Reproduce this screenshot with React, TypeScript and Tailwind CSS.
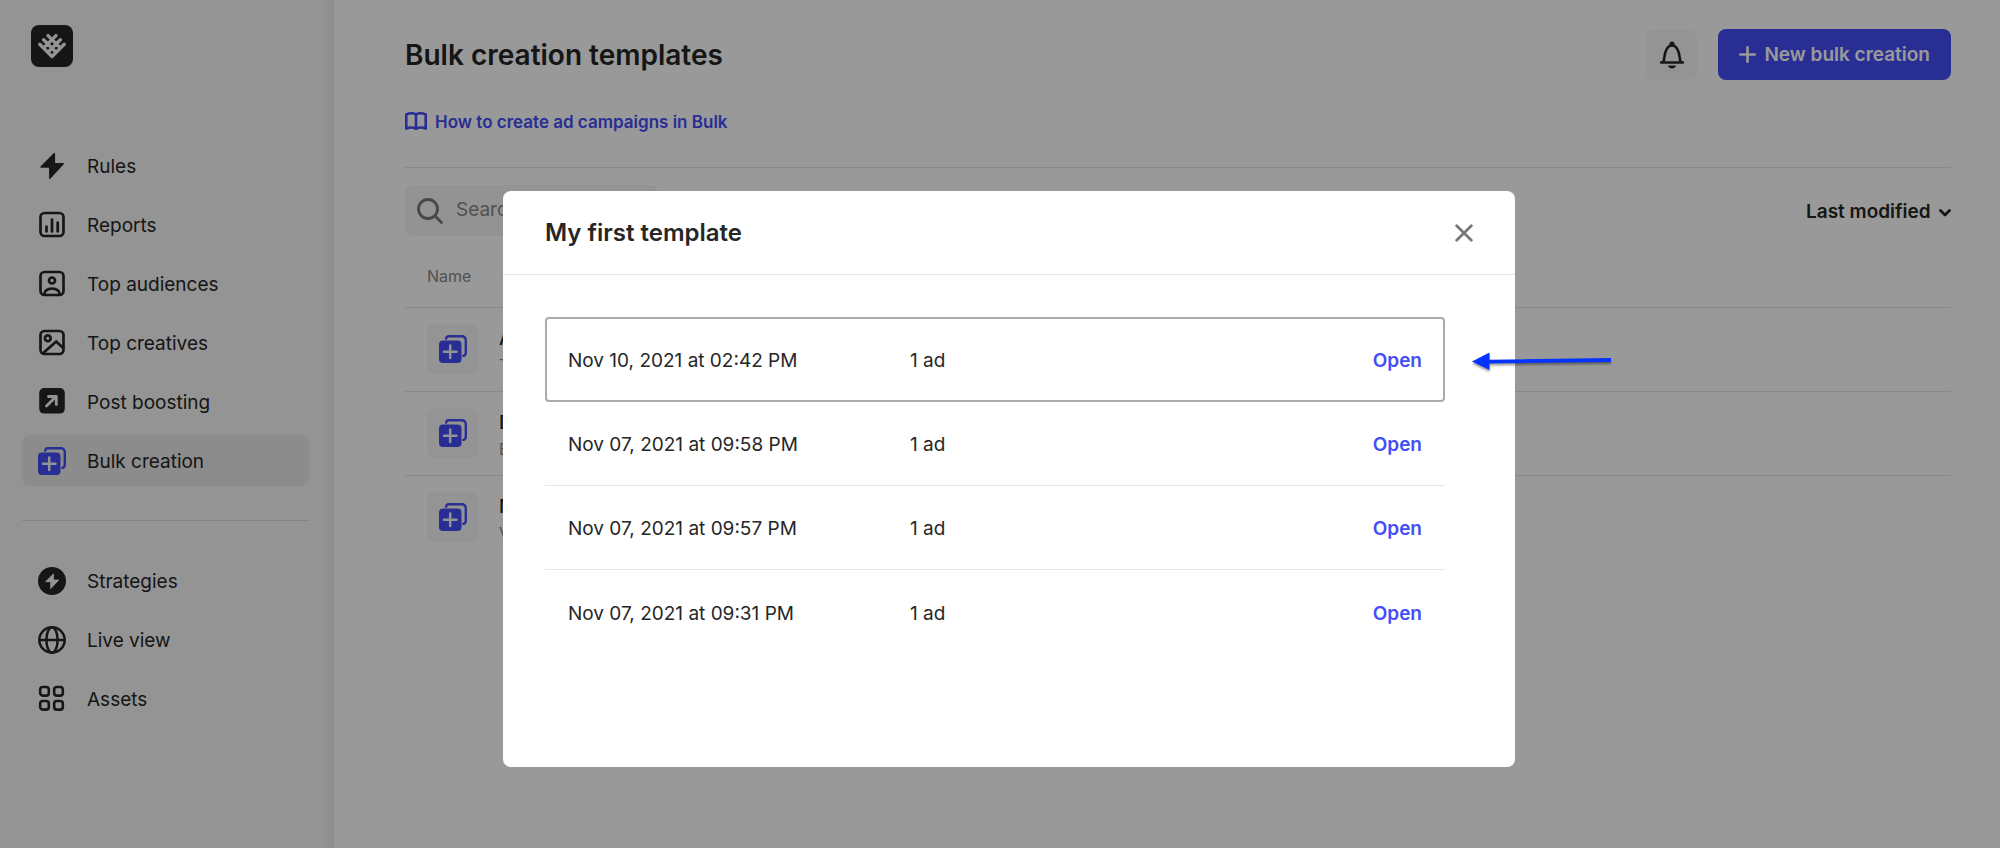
import type { ReactNode } from 'react'

const icon = 'w-7 h-7 shrink-0'

function Logo() {
  return (
    <svg viewBox="0 0 42 42" className="w-[42px] h-[42px]" aria-hidden="true">
      <rect width="42" height="42" rx="8" fill="#262626" />
      <path
        d="M8.8 19.3 21 31.5M12.6 14.8 25.2 27.4M17 10.6 29.5 23.1M33.2 19.3 21 31.5M29.4 14.8 16.8 27.4M25 10.6 12.5 23.1"
        stroke="#f7f7f7"
        strokeWidth="3.4"
        strokeLinecap="round"
      />
    </svg>
  )
}

function BoltIcon() {
  return (
    <svg viewBox="0 0 28 28" className={icon} fill="currentColor" aria-hidden="true">
      <path
        d="M16.4 1.6 3 15h8.8v11.400L25.200 11.800h-8.800z"
        stroke="currentColor"
        strokeWidth="1.4"
        strokeLinejoin="round"
      />
    </svg>
  )
}

function ReportsIcon() {
  return (
    <svg viewBox="0 0 28 28" className={icon} fill="none" stroke="currentColor" strokeWidth="2.7" strokeLinecap="round" aria-hidden="true">
      <rect x="2.5" y="2" width="23" height="23" rx="4" />
      <path d="M8.500 15.500v5M14 8.500v12M19.700 11.500v9" />
    </svg>
  )
}

function AudienceIcon() {
  return (
    <svg viewBox="0 0 28 28" className={icon} fill="none" stroke="currentColor" strokeWidth="2.7" aria-hidden="true">
      <rect x="2.5" y="2" width="23" height="23" rx="4" />
      <circle cx="14" cy="10.500" r="3" />
      <path d="M6 25c.5-4.500 3.600-6.300 8-6.300s7.500 1.800 8 6.300" />
    </svg>
  )
}

function CreativeIcon() {
  return (
    <svg viewBox="0 0 28 28" className={icon} fill="none" stroke="currentColor" strokeWidth="2.7" strokeLinejoin="round" aria-hidden="true">
      <rect x="2.5" y="2" width="23" height="23" rx="4" />
      <circle cx="9.800" cy="9.300" r="2.900" />
      <path d="M5 24.300 18.200 12.500l7 6.500" />
    </svg>
  )
}

function BoostIcon() {
  return (
    <svg viewBox="0 0 28 28" className={icon} fill="none" aria-hidden="true">
      <rect x="1.200" y="0" width="25.600" height="25.600" rx="5" fill="currentColor" />
      <path d="M8.500 18 18 8.500M10.500 8.500H18.300v8" stroke="#f7f7f7" strokeWidth="2.8" strokeLinecap="round" strokeLinejoin="round" />
    </svg>
  )
}

function BulkIcon() {
  return (
    <svg viewBox="0 0 28 28" className={`${icon} text-[#444df7]`} fill="none" aria-hidden="true">
      <path d="M7.200 3.600A2.700 2.700 0 0 1 9.900 1.200H23a3.800 3.800 0 0 1 3.800 3.800V17.500a3.300 3.300 0 0 1-2.400 3.300" stroke="currentColor" strokeWidth="2.4" strokeLinecap="round" />
      <rect y="5.500" width="22.500" height="22.500" rx="4" fill="currentColor" />
      <path d="M11.200 10.500v12.500M5 16.700h12.500" stroke="#f7f7f7" strokeWidth="2.5" strokeLinecap="round" />
    </svg>
  )
}

function StrategiesIcon() {
  return (
    <svg viewBox="0 0 28 28" className={icon} aria-hidden="true">
      <circle cx="14" cy="14" r="14" fill="currentColor" />
      <path d="M15.500 6.800 7.700 14.700h5v6.800l8.100-8.500h-5.300z" fill="#f7f7f7" stroke="#f7f7f7" strokeWidth=".8" strokeLinejoin="round" />
    </svg>
  )
}

function GlobeIcon() {
  return (
    <svg viewBox="0 0 28 28" className={icon} fill="none" stroke="currentColor" strokeWidth="2.5" aria-hidden="true">
      <circle cx="14" cy="14" r="12.700" />
      <ellipse cx="14" cy="14" rx="5.600" ry="12.700" />
      <path d="M1.300 14h25.400" />
    </svg>
  )
}

function AssetsIcon() {
  return (
    <svg viewBox="0 0 28 28" className={icon} fill="none" stroke="currentColor" strokeWidth="2.6" aria-hidden="true">
      <rect x="2.200" y="2" width="8.600" height="8.600" rx="2.600" />
      <rect x="16.200" y="2" width="8.600" height="8.600" rx="2.600" />
      <rect x="2.200" y="16" width="8.600" height="8.600" rx="2.600" />
      <rect x="16.200" y="16" width="8.600" height="8.600" rx="2.600" />
    </svg>
  )
}

function BookIcon() {
  return (
    <svg viewBox="0 0 22 20" className="w-[22px] h-5 shrink-0" fill="none" stroke="currentColor" strokeWidth="2.6" strokeLinejoin="round" aria-hidden="true">
      <path d="M11 2.700C9 .8 4.500.8 1.300 2.500v14.200c3.200-1.600 7.500-1.500 9.700.3 2.200-1.800 6.500-1.900 9.700-.3V2.500C17.500.8 13 .8 11 2.700zM11 2.700V17" />
    </svg>
  )
}

function BellIcon() {
  return (
    <svg viewBox="0 0 28 28" className={icon} fill="none" aria-hidden="true">
      <circle cx="14" cy="3" r="2.600" fill="currentColor" />
      <path d="M5.200 21.500c0-1 .6-1.600.8-3 .7-4.600.8-7.200 2.500-10C9.800 6 11.500 4.200 14 4.200S18.200 6 19.500 8.500c1.700 2.800 1.800 5.400 2.500 10 .2 1.400.8 2 .8 3" stroke="currentColor" strokeWidth="2.6" />
      <path d="M3.200 21.500h21.600" stroke="currentColor" strokeWidth="2.600" strokeLinecap="round" />
      <path d="M10 24.500h8c-.5 2-2 3-4 3s-3.500-1-4-3z" fill="currentColor" />
    </svg>
  )
}

const mainNav = [
  { label: 'Rules', icon: <BoltIcon /> },
  { label: 'Reports', icon: <ReportsIcon /> },
  { label: 'Top audiences', icon: <AudienceIcon /> },
  { label: 'Top creatives', icon: <CreativeIcon /> },
  { label: 'Post boosting', icon: <BoostIcon /> },
  { label: 'Bulk creation', icon: <BulkIcon />, active: true },
]

const moreNav = [
  { label: 'Strategies', icon: <StrategiesIcon /> },
  { label: 'Live view', icon: <GlobeIcon /> },
  { label: 'Assets', icon: <AssetsIcon /> },
]

const templates = [
  { name: 'Ads', note: 'Test' },
  { name: 'Demo', note: 'Bulk' },
  { name: 'My first', note: 'Video' },
]

const versions = [
  { date: 'Nov 10, 2021 at 02:42 PM', ads: '1 ad', selected: true },
  { date: 'Nov 07, 2021 at 09:58 PM', ads: '1 ad' },
  { date: 'Nov 07, 2021 at 09:57 PM', ads: '1 ad' },
  { date: 'Nov 07, 2021 at 09:31 PM', ads: '1 ad' },
]

function NavLink({ label, icon, active }: { label: string; icon: ReactNode; active?: boolean }) {
  return (
    <a
      href="#"
      className={
        active
          ? 'flex items-center gap-[21px] h-[51px] pl-4 rounded-lg bg-[#e9e9e9]'
          : 'flex items-center gap-[21px] h-[51px] pl-4 rounded-lg'
      }
    >
      {icon}
      <span className="pt-[3px]">{label}</span>
    </a>
  )
}

function Sidebar() {
  return (
    <aside className="w-[334px] shrink-0 pl-[22px] pr-[25px] pt-[25px] bg-linear-to-l from-[#ececec] to-[#f7f7f7] to-[14px] text-[19px]">
      <a href="#" aria-label="Home" className="block w-[42px] ml-[9px]">
        <Logo />
      </a>
      <nav className="mt-[73px] flex flex-col gap-2">
        {mainNav.map((item) => (
          <NavLink key={item.label} {...item} />
        ))}
      </nav>
      <hr className="mt-[34px] mb-[34px] border-[#dcdcdc]" />
      <nav className="flex flex-col gap-2">
        {moreNav.map((item) => (
          <NavLink key={item.label} {...item} />
        ))}
      </nav>
    </aside>
  )
}

function VersionsModal() {
  return (
    <div className="fixed inset-0 z-10 flex items-start justify-center bg-black/40 pt-[191px] pl-[18px]">
      <div role="dialog" aria-label="My first template" className="w-full max-w-[1012px] min-h-[576px] rounded-lg bg-white">
        <header className="h-[84px] px-[42px] flex items-center justify-between border-b border-[#e6e6e6]">
          <h2 className="text-2xl font-semibold">My first template</h2>
          <button aria-label="Close" className="text-[#777]">
            <svg viewBox="0 0 18 18" className="w-[18px] h-[18px]" fill="none" stroke="currentColor" strokeWidth="2.8" strokeLinecap="round">
              <path d="M1.700 1.700l14.600 14.600M16.300 1.700 1.700 16.300" />
            </svg>
          </button>
        </header>
        <ul className="pt-[42px] pl-[42px] pr-[70px] text-[19px]">
          {versions.map((v) => (
            <li
              key={v.date}
              className={
                v.selected
                  ? 'relative h-[85px] pt-[3px] px-[21px] flex items-center border-2 border-[#ababab] rounded-sm'
                  : 'h-[84px] pt-1 px-[23px] flex items-center border-b border-[#e6e6e6] last:border-0'
              }
            >
              <span className="w-[342px]">{v.date}</span>
              <span>{v.ads}</span>
              <button className="ml-auto font-semibold text-[#444df7]">Open</button>
              {v.selected && (
                <svg
                  viewBox="0 0 140 24"
                  className="absolute left-full ml-[29px] w-[140px] h-6 drop-shadow-[0_2px_1px_rgba(0,0,0,0.4)]"
                  fill="#0433ff"
                  aria-hidden="true"
                >
                  <path d="M0 12.500 17.500 3.500v7.300L139 9v4L17.500 14.500v6.500z" />
                </svg>
              )}
            </li>
          ))}
        </ul>
      </div>
    </div>
  )
}

export default function App() {
  return (
    <div className="min-h-screen flex bg-white text-[#262626] font-[Inter,sans-serif]">
      <Sidebar />
      <main className="flex-1 pl-[71px] pr-[49px] pt-[29px]">
        <div className="flex items-center justify-between">
          <h1 className="text-[28px] font-semibold">Bulk creation templates</h1>
          <div className="flex gap-[21px]">
            <button aria-label="Notifications" className="w-[51px] h-[51px] flex items-center justify-center rounded-lg bg-[#f7f7f7]">
              <BellIcon />
            </button>
            <button className="h-[51px] px-[21px] flex items-center gap-2 rounded-lg bg-[#444df7] text-white text-[19px] font-semibold">
              <svg viewBox="0 0 17 17" className="w-[17px] h-[17px]" stroke="currentColor" strokeWidth="2.6" strokeLinecap="round" aria-hidden="true">
                <path d="M8.500 1.300v14.400M1.300 8.500h14.400" />
              </svg>
              <span className="pt-0.5">New bulk creation</span>
            </button>
          </div>
        </div>

        <div className="pt-[30px] pb-[33px] border-b border-[#e6e6e6]">
          <a href="#" className="flex w-fit items-center gap-2 text-[17px] leading-6 font-semibold text-[#444df7]">
            <BookIcon />
            How to create ad campaigns in Bulk
          </a>
        </div>

        <div className="pt-[17px] flex items-center justify-between">
          <label className="w-[253px] h-[51px] pl-3 flex items-center gap-[13px] rounded-lg bg-[#f5f5f5] text-[#777]">
            <svg viewBox="0 0 26 26" className="w-[26px] h-[26px] shrink-0" fill="none" stroke="currentColor" strokeWidth="2.8" strokeLinecap="round" aria-hidden="true">
              <circle cx="11" cy="11" r="9.500" />
              <path d="M18 18l6.500 6.500" />
            </svg>
            <input aria-label="Search templates" placeholder="Search" className="w-full bg-transparent text-[19px] placeholder:text-[#888]" />
          </label>
          <div className="flex items-center gap-2 pt-1">
            <select aria-label="Sort by" className="appearance-none text-[19px] font-semibold">
              <option>Last modified</option>
            </select>
            <svg viewBox="0 0 12 8" className="w-3 h-2" fill="none" stroke="currentColor" strokeWidth="2.8" strokeLinecap="round" strokeLinejoin="round" aria-hidden="true">
              <path d="M1.500 1.500 6 6l4.500-4.500" />
            </svg>
          </div>
        </div>

        <table className="mt-[10px] w-full text-left">
          <thead>
            <tr className="h-[61px] border-b border-[#e6e6e6]">
              <th className="pl-[22px] text-base font-normal text-[#888]">Name</th>
            </tr>
          </thead>
          <tbody>
            {templates.map((t) => (
              <tr key={t.name} className="h-[84px] border-b border-[#e6e6e6] last:border-0">
                <td className="pl-[22px]">
                  <div className="flex items-center gap-[21px]">
                    <span className="w-[51px] h-[51px] flex items-center justify-center rounded-lg bg-[#f7f7f7]">
                      <BulkIcon />
                    </span>
                    <span className="pt-2">
                      <span className="block text-[19px] leading-6 font-medium">{t.name}</span>
                      <span className="block text-base leading-7 text-[#888]">{t.note}</span>
                    </span>
                  </div>
                </td>
              </tr>
            ))}
          </tbody>
        </table>
      </main>
      <VersionsModal />
    </div>
  )
}
